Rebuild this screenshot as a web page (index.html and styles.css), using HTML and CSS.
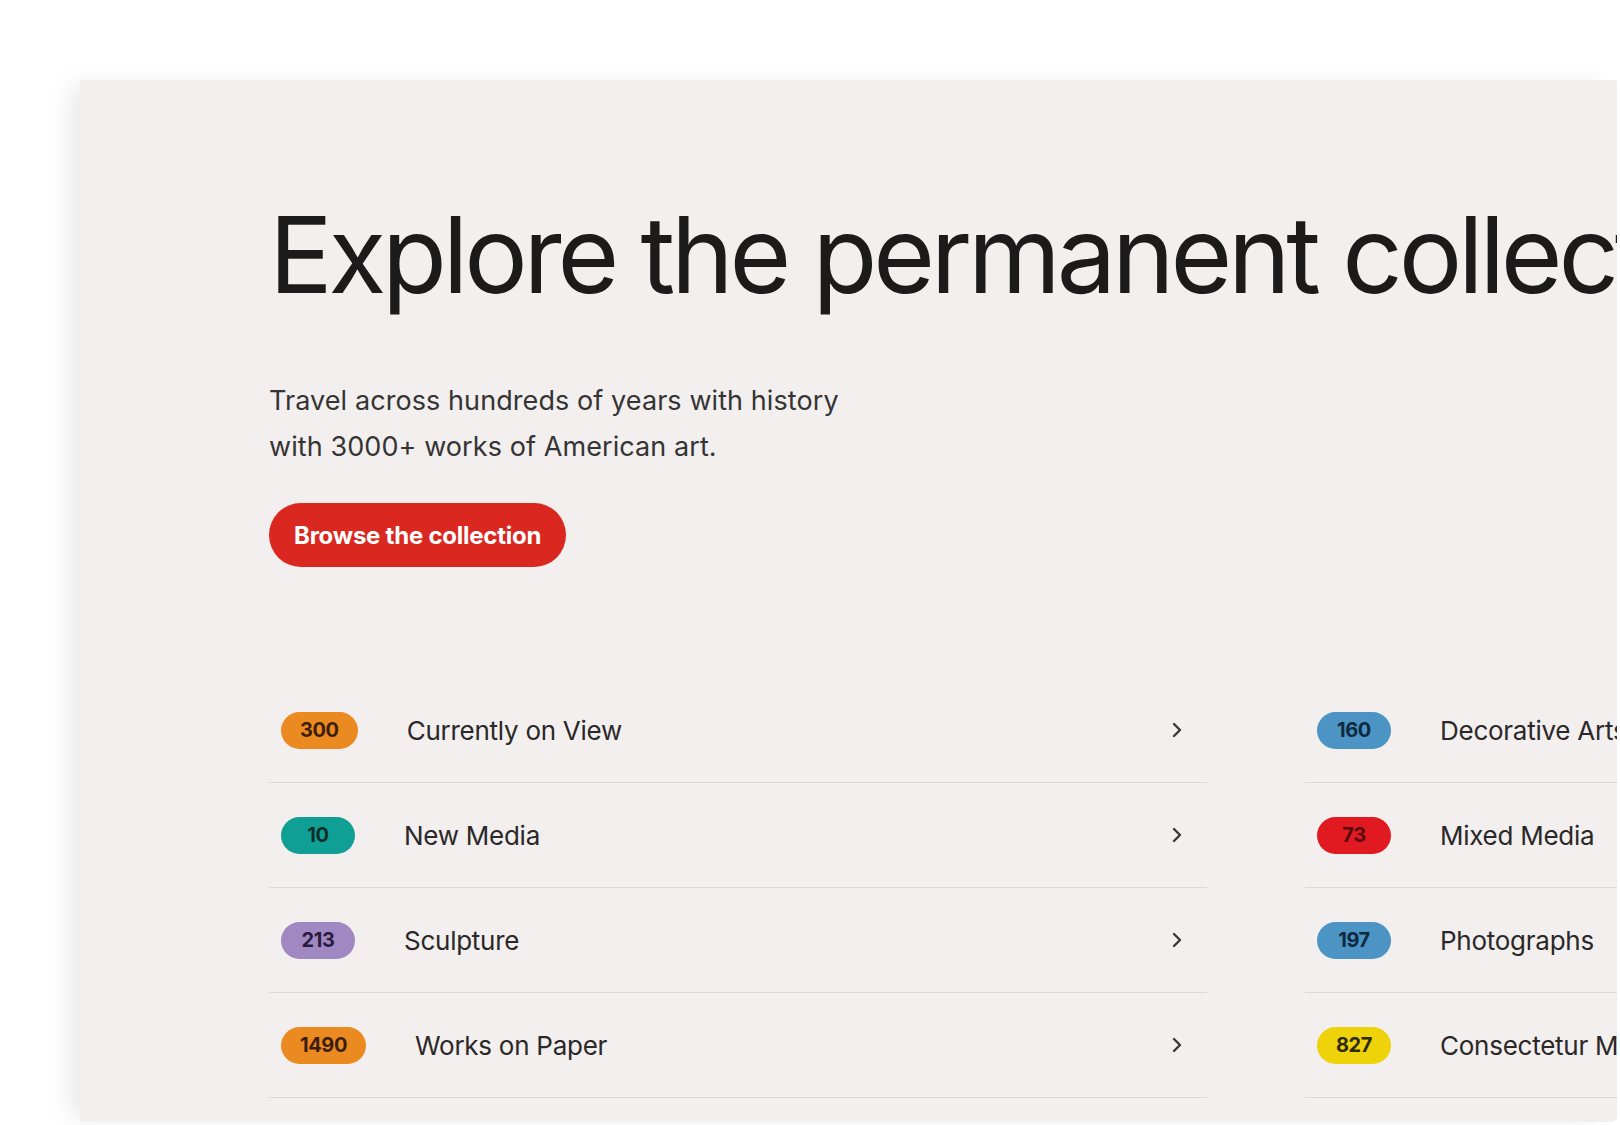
FILE: index.html
```html
<!DOCTYPE html>
<html lang="en">
<head>
<meta charset="utf-8">
<title>Explore the permanent collection</title>
<link rel="stylesheet" href="styles.css">
</head>
<body>
<main class="panel">
  <div class="content">
    <h1 class="title">Explore the permanent collection</h1>
    <p class="lead">Travel across hundreds of years with history<br>with 3000+ works of American art.</p>
    <a class="cta" href="#">Browse the collection</a>
    <div class="lists">
      <ul class="list">
        <li class="row"><span class="badge orange">300</span><span class="label">Currently on View</span><svg class="chev" viewBox="0 0 10 16" aria-hidden="true"><path d="M2 2 L8 8 L2 14"/></svg></li>
        <li class="row"><span class="badge teal">10</span><span class="label">New Media</span><svg class="chev" viewBox="0 0 10 16" aria-hidden="true"><path d="M2 2 L8 8 L2 14"/></svg></li>
        <li class="row"><span class="badge purple">213</span><span class="label">Sculpture</span><svg class="chev" viewBox="0 0 10 16" aria-hidden="true"><path d="M2 2 L8 8 L2 14"/></svg></li>
        <li class="row"><span class="badge orange">1490</span><span class="label">Works on Paper</span><svg class="chev" viewBox="0 0 10 16" aria-hidden="true"><path d="M2 2 L8 8 L2 14"/></svg></li>
      </ul>
      <ul class="list">
        <li class="row"><span class="badge blue">160</span><span class="label">Decorative Arts</span><svg class="chev" viewBox="0 0 10 16" aria-hidden="true"><path d="M2 2 L8 8 L2 14"/></svg></li>
        <li class="row"><span class="badge red">73</span><span class="label">Mixed Media</span><svg class="chev" viewBox="0 0 10 16" aria-hidden="true"><path d="M2 2 L8 8 L2 14"/></svg></li>
        <li class="row"><span class="badge blue">197</span><span class="label">Photographs</span><svg class="chev" viewBox="0 0 10 16" aria-hidden="true"><path d="M2 2 L8 8 L2 14"/></svg></li>
        <li class="row"><span class="badge yellow">827</span><span class="label">Consectetur Media</span><svg class="chev" viewBox="0 0 10 16" aria-hidden="true"><path d="M2 2 L8 8 L2 14"/></svg></li>
      </ul>
    </div>
  </div>
</main>
</body>
</html>
```
FILE: styles.css
```css
html, body {
  margin: 0;
  padding: 0;
  background: #ffffff;
  height: 100%;
  overflow: hidden;
}
body {
  font-family: Inter, "Noto Sans", "Liberation Sans", sans-serif;
  color: #1d1b1b;
}
.panel {
  margin: 80px 3px 0 80px;
  height: 1042px;
  background: #f2efee;
  box-shadow: -14px 0 24px -6px rgba(0, 0, 0, 0.10);
  overflow: hidden;
  border-bottom-right-radius: 6px;
}
.content {
  padding: 0 0 0 189px;
  width: 2200px;
}
.title {
  margin: 0;
  padding-top: 109px;
  font-size: 106px;
  line-height: 132px;
  font-weight: 400;
  letter-spacing: -0.04em;
  white-space: nowrap;
  color: #1c1a1a;
}
.lead {
  margin: 57px 0 0 0;
  font-size: 27px;
  line-height: 46px;
  color: #353434;
  letter-spacing: 0.003em;
}
.cta {
  display: inline-flex;
  align-items: center;
  margin-top: 33px;
  height: 64px;
  padding: 0 25px;
  border-radius: 32px;
  background: #da2720;
  color: #ffffff;
  font-size: 24px;
  font-weight: 700;
  letter-spacing: -0.01em;
  text-decoration: none;
}
.lists {
  display: grid;
  grid-template-columns: 938px 938px;
  column-gap: 98px;
  margin-top: 111px;
}
.list {
  list-style: none;
  margin: 0;
  padding: 0;
}
.row {
  display: flex;
  align-items: center;
  height: 104px;
  border-bottom: 1px solid #dcd8d7;
  padding: 0 25px 0 12px;
}
.badge {
  display: inline-flex;
  align-items: center;
  justify-content: center;
  min-width: 36px;
  height: 37px;
  padding: 0 19px;
  border-radius: 19px;
  font-size: 20px;
  font-weight: 700;
  letter-spacing: -0.02em;
}
.label {
  flex: 1;
  margin-left: 49px;
  font-size: 26px;
  color: #2a2828;
  letter-spacing: -0.01em;
}
.chev {
  width: 10px;
  height: 16px;
  fill: none;
  stroke: #3a3838;
  stroke-width: 2.4;
  stroke-linecap: round;
  stroke-linejoin: round;
}
.orange { background: #ec8a22; color: #3d1e08; }
.teal { background: #0f9f94; color: #0b2e2b; }
.purple { background: #a088c2; color: #2b1c3f; }
.blue { background: #4b94c4; color: #0f2a40; }
.red { background: #e11920; color: #5a0a0c; }
.yellow { background: #efd30a; color: #2e2a06; }
```
